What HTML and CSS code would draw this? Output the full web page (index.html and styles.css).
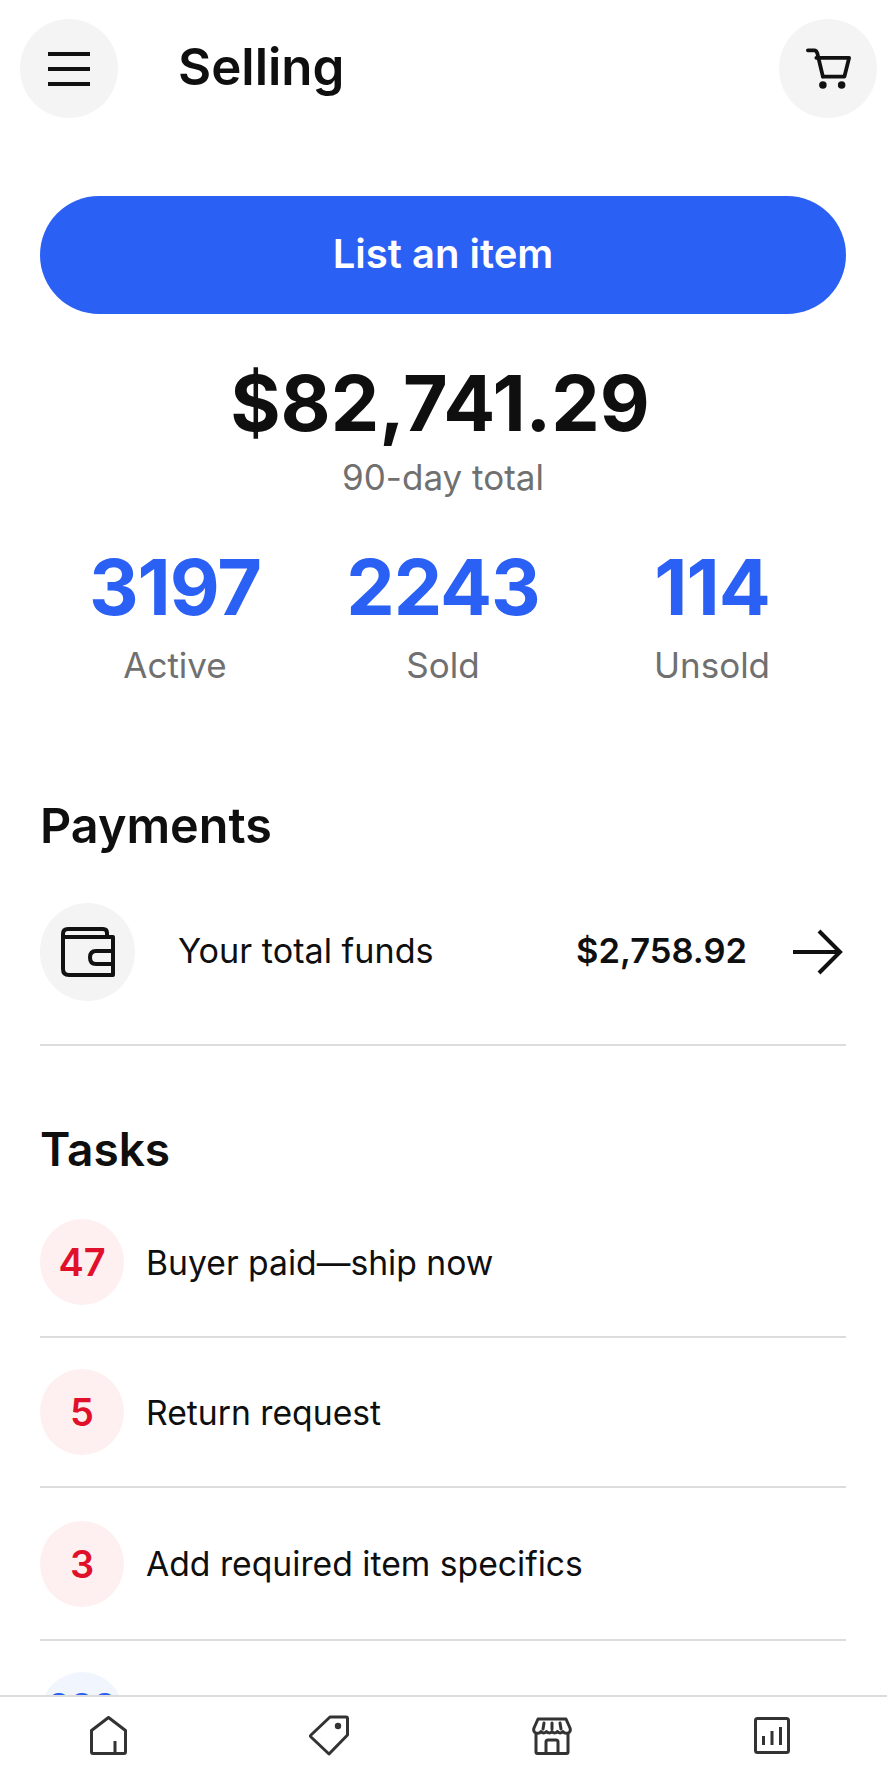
FILE: index.html
```html
<!DOCTYPE html>
<html lang="en">
<head>
    <meta charset="UTF-8">
    <title>Selling</title>
    <link rel="stylesheet" href="styles.css">
</head>
<body>
    <div class="page">
        <header class="topbar">
            <div class="round-btn">
                <svg width="42" height="36" viewBox="0 0 42 36" fill="none" stroke="#111" stroke-width="4"><path d="M0 3h42M0 18h42M0 33h42"/></svg>
            </div>
            <h1 class="title">Selling</h1>
            <div class="round-btn">
                <svg width="45" height="42" viewBox="0 0 48 44" fill="none" stroke="#111" stroke-width="4" stroke-linejoin="round" stroke-linecap="round"><path d="M2 2h7q2 0 3 3l6 25"/><path d="M11 10h35l-5 20H18"/><circle cx="18" cy="39" r="4" fill="#111" stroke="none"/><circle cx="38" cy="39" r="4" fill="#111" stroke="none"/></svg>
            </div>
        </header>

        <main class="content">
            <button class="list-btn">List an item</button>

            <div class="total">
                <div class="total-value">$82,741.29</div>
                <div class="total-label">90-day total</div>
            </div>

            <div class="stats">
                <div class="stat"><div class="stat-value">3197</div><div class="stat-label">Active</div></div>
                <div class="stat"><div class="stat-value">2243</div><div class="stat-label">Sold</div></div>
                <div class="stat"><div class="stat-value">114</div><div class="stat-label">Unsold</div></div>
            </div>

            <h2 class="section-title payments-title">Payments</h2>
            <div class="funds-row">
                <div class="funds-icon">
                    <svg width="54" height="50" viewBox="0 0 54 50" fill="none" stroke="#111" stroke-width="4" stroke-linejoin="round"><path d="M2 10V7q0-5 5-5h35q4 0 4 4v4"/><path d="M2 10v32q0 6 6 6h44V10z"/><path d="M52 24H35q-6 0-6 6.500t6 6.500h17"/></svg>
                </div>
                <span class="funds-label">Your total funds</span>
                <span class="funds-amount">$2,758.92</span>
                <svg class="funds-arrow" width="50" height="46" viewBox="0 0 50 46" fill="none" stroke="#111" stroke-width="4"><path d="M0 23h47M26 2l21 21-21 21"/></svg>
            </div>

            <h2 class="section-title tasks-title">Tasks</h2>
            <div class="task"><div class="task-count">47</div><span class="task-text">Buyer paid—ship now</span></div>
            <div class="task"><div class="task-count">5</div><span class="task-text">Return request</span></div>
            <div class="task tall"><div class="task-count">3</div><span class="task-text">Add required item specifics</span></div>
            <div class="task"><div class="task-count blue">283</div></div>
        </main>

        <nav class="bottom-nav">
            <svg width="37" height="39" viewBox="0 0 37 39" fill="none" stroke="#333" stroke-width="3" stroke-linejoin="round"><path d="M1.500 14.500 18.500 1.500l17 13V36q0 1.500-1.500 1.500H3Q1.500 37.500 1.500 36z"/><path d="M25 25v12.500"/></svg>
            <svg width="40" height="41" viewBox="0 0 40 41" fill="none" stroke="#333" stroke-width="3" stroke-linejoin="round"><path d="M21 2h16q1.500 0 1.500 1.500V20L20 39 2 22q-1-1 0-2z"/><circle cx="29" cy="11" r="3.200" fill="#333" stroke="none"/></svg>
            <svg width="40" height="38" viewBox="0 0 40 38" fill="none" stroke="#333" stroke-width="3" stroke-linejoin="round" stroke-linecap="round"><path d="M6 2h28l4 9q1 3-1 4.500-4 2-6-1-3 3-5.500 0-3 3-5.500 0-2.500 3-5.500 0-3 3-5.500 0-2 3-6 1-2-1.500-1-4.500z"/><path d="M4 17v18q0 1.500 1.500 1.500h29Q36 36.500 36 35V17"/><path d="M14 36.500V25q0-2 2-2h8q2 0 2 2v11.500"/><path d="M12 6l-1 6M20 6v6M28 6l1 6"/></svg>
            <svg width="36" height="37" viewBox="0 0 36 37" fill="none" stroke="#333" stroke-width="3" stroke-linejoin="round"><rect x="1.500" y="1.500" width="33" height="34" rx="2"/><path d="M9.500 28v-9M18 28V14M26.500 28V10"/></svg>
        </nav>
    </div>
</body>
</html>
```
FILE: styles.css
```css
* {
    box-sizing: border-box;
}

body {
    margin: 0;
    background-color: #fff;
    color: #0f0f0f;
    font-family: Inter, "Liberation Sans", sans-serif;
}

.page {
    position: relative;
    height: 1774px;
    overflow: hidden;
}

.topbar {
    display: flex;
    align-items: center;
    padding: 19px 10px 0 20px;
}

.round-btn {
    width: 98px;
    height: 99px;
    border-radius: 50%;
    background-color: #f4f4f4;
    display: flex;
    align-items: center;
    justify-content: center;
}

.title {
    flex: 1;
    margin: 0 0 5px 60px;
    font-size: 51px;
    font-weight: 600;
}

.content {
    padding: 78px 41px 0 40px;
}

.list-btn {
    display: block;
    width: 100%;
    height: 118px;
    padding-bottom: 4px;
    border: none;
    border-radius: 59px;
    background-color: #2b60f4;
    color: #fff;
    font-family: inherit;
    font-size: 40px;
    font-weight: 600;
}

.total {
    text-align: center;
    margin-top: 41px;
}

.total-value {
    padding-right: 6px;
    font-size: 77px;
    font-weight: 700;
    line-height: 96px;
}

.total-label {
    margin-top: 4px;
    font-size: 35px;
    color: #707070;
    line-height: 44px;
}

.stats {
    display: grid;
    grid-template-columns: 266px 270px 268px;
    padding-left: 2px;
    margin-top: 45px;
    text-align: center;
}

.stat-value {
    font-size: 77px;
    font-weight: 700;
    line-height: 86px;
    letter-spacing: -1px;
    color: #2b60f4;
}

.stat-label {
    margin-top: 12px;
    font-size: 35px;
    line-height: 46px;
    color: #707070;
}

.section-title {
    margin: 0;
    font-size: 46px;
    font-weight: 600;
    line-height: 56px;
}

.payments-title {
    margin-top: 110px;
    font-size: 48.500px;
}

.funds-row {
    display: flex;
    align-items: center;
    margin-top: 49px;
    padding: 0 3px 43px 0;
    border-bottom: 2px solid #dcdcdc;
}

.funds-icon {
    width: 95px;
    height: 98px;
    border-radius: 50%;
    background-color: #f4f4f4;
    display: flex;
    align-items: center;
    justify-content: center;
}

.funds-label {
    flex: 1;
    margin: 0 0 3px 43px;
    font-size: 34.200px;
}

.funds-amount {
    margin-bottom: 3px;
    font-size: 34.500px;
    font-weight: 600;
}

.funds-arrow {
    margin-left: 46px;
}

.tasks-title {
    margin-top: 75px;
    margin-bottom: 11px;
}

.task {
    display: flex;
    align-items: center;
    height: 150px;
    border-bottom: 2px solid #dcdcdc;
}

.task.tall {
    height: 153px;
}

.task-count {
    width: 84px;
    height: 86px;
    border-radius: 50%;
    background-color: #fef0f1;
    color: #e0102a;
    font-size: 38px;
    font-weight: 600;
    display: flex;
    align-items: center;
    justify-content: center;
}

.task-count.blue {
    padding-bottom: 18px;
    background-color: #f1f6fe;
    color: #2b60f4;
    font-size: 36px;
}

.task-text {
    margin-left: 22px;
    font-size: 33.700px;
}

.bottom-nav {
    position: absolute;
    left: 0;
    right: 0;
    bottom: 0;
    height: 79px;
    padding: 0 97px 0 90px;
    background-color: #fff;
    border-top: 2px solid #dcdcdc;
    display: flex;
    justify-content: space-between;
    align-items: center;
}
```
